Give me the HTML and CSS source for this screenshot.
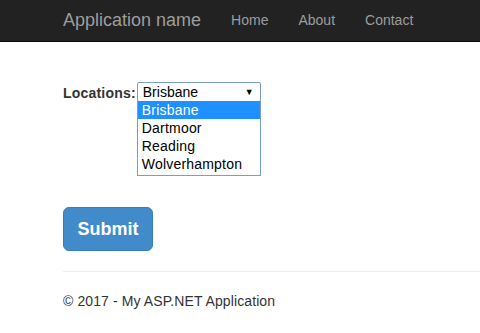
FILE: index.html
```html
<!DOCTYPE html>
<html lang="en">
<head>
<meta charset="UTF-8" />
<title>Home Page - My ASP.NET Application</title>
<link rel="stylesheet" href="styles.css">
</head>
<body>
<div class="navbar">
  <div class="container nav-inner">
    <a class="brand" href="#">Application name</a>
    <ul class="nav">
      <li><a href="#">Home</a></li>
      <li><a href="#">About</a></li>
      <li><a href="#">Contact</a></li>
    </ul>
  </div>
</div>

<div class="container body-content">
  <form class="loc-form">
    <div class="field">
      <label for="loc">Locations:</label>
      <div class="select-wrap">
        <div class="select" id="loc">
          <span>Brisbane</span>
          <span class="caret">&#9660;</span>
        </div>
        <ul class="options">
          <li class="selected">Brisbane</li>
          <li>Dartmoor</li>
          <li>Reading</li>
          <li>Wolverhampton</li>
        </ul>
      </div>
    </div>
    <button type="button" class="btn">Submit</button>
  </form>
  <hr />
  <footer>
    <p>&copy; 2017 - My ASP.NET Application</p>
  </footer>
</div>
</body>
</html>
```

FILE: styles.css
```css
* { box-sizing: border-box; }
html, body {
  margin: 0; padding: 0;
  background: #fff;
  font-family: 'Liberation Sans', Arial, sans-serif;
  font-size: 14px;
  line-height: 1.42857;
  color: #333;
  overflow: hidden;
}
.container { padding-left: 63px; }

/* Top bar */
.navbar {
  background: #222;
  border-bottom: 1px solid #080808;
  height: 42px;
}
.nav-inner {
  display: flex;
  align-items: center;
  height: 41px;
}
.brand {
  color: #9d9d9d;
  font-size: 18px;
  text-decoration: none;
  margin-right: 15px;
}
.nav {
  display: flex;
  list-style: none;
  margin: 0; padding: 0;
}
.nav a {
  display: block;
  padding: 0 15px;
  color: #9d9d9d;
  text-decoration: none;
}

/* Form */
.loc-form { padding-top: 40px; }
.field {
  display: flex;
  align-items: flex-start;
}
label {
  font-weight: bold;
  line-height: 20px;
  padding-top: 1px;
  margin-right: 1px;
  letter-spacing: 0.2px;
}
.select-wrap { position: relative; }
.select {
  width: 124px;
  height: 20px;
  border: 1px solid #7a9cd3;
  border-radius: 2px;
  display: flex;
  justify-content: space-between;
  align-items: center;
  padding: 0 6px 0 5px;
  color: #000;
  line-height: 18px;
}
.caret { font-size: 9px; }
.options {
  position: absolute;
  top: 19px; left: 0;
  width: 124px;
  margin: 0; padding: 0 0 2px;
  list-style: none;
  background: #fff;
  border: 1px solid #7a9cd3;
  border-top: none;
  color: #000;
  letter-spacing: 0.2px;
}
.options li {
  height: 18px;
  line-height: 18px;
  padding-left: 4px;
}
.options .selected {
  background: #1e90ff;
  color: #fff;
}
.btn {
  display: block;
  width: 90px;
  height: 44px;
  margin-top: 104px;
  font-family: inherit;
  font-size: 18px;
  font-weight: bold;
  line-height: 24px;
  padding: 0;
  color: #fff;
  background: #428bca;
  border: 1px solid #357ebd;
  border-radius: 6px;
}

hr {
  margin: 20px 0;
  border: 0;
  border-top: 1px solid #eee;
}
footer p { margin: 0; letter-spacing: 0.1px; }
```
